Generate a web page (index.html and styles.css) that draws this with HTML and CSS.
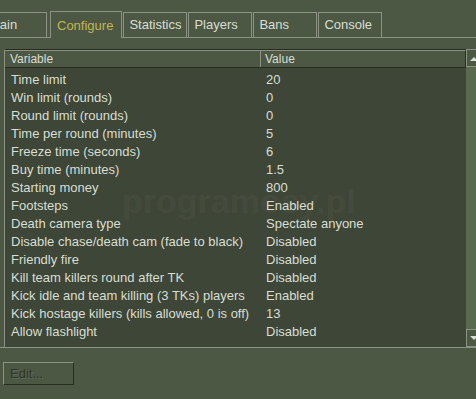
FILE: index.html
```html
<!DOCTYPE html>
<html lang="en">
<head>
    <meta charset="UTF-8">
    <title>Server - Configure</title>
    <link rel="stylesheet" href="styles.css">
</head>
<body>
    <div class="tabs">
        <div class="tab tab-first">Main</div>
        <div class="tab active">Configure</div>
        <div class="tab">Statistics</div>
        <div class="tab">Players</div>
        <div class="tab">Bans</div>
        <div class="tab">Console</div>
    </div>

    <div class="panel">
        <div class="listview">
            <div class="list-main">
                <div class="list-header">
                    <div class="col-var">Variable</div>
                    <div class="col-val">Value</div>
                </div>
                <div class="list-body">
                    <div class="row"><span class="col-var">Time limit</span><span class="col-val">20</span></div>
                    <div class="row"><span class="col-var">Win limit (rounds)</span><span class="col-val">0</span></div>
                    <div class="row"><span class="col-var">Round limit (rounds)</span><span class="col-val">0</span></div>
                    <div class="row"><span class="col-var">Time per round (minutes)</span><span class="col-val">5</span></div>
                    <div class="row"><span class="col-var">Freeze time (seconds)</span><span class="col-val">6</span></div>
                    <div class="row"><span class="col-var">Buy time (minutes)</span><span class="col-val">1.5</span></div>
                    <div class="row"><span class="col-var">Starting money</span><span class="col-val">800</span></div>
                    <div class="row"><span class="col-var">Footsteps</span><span class="col-val">Enabled</span></div>
                    <div class="row"><span class="col-var">Death camera type</span><span class="col-val">Spectate anyone</span></div>
                    <div class="row"><span class="col-var">Disable chase/death cam (fade to black)</span><span class="col-val">Disabled</span></div>
                    <div class="row"><span class="col-var">Friendly fire</span><span class="col-val">Disabled</span></div>
                    <div class="row"><span class="col-var">Kill team killers round after TK</span><span class="col-val">Disabled</span></div>
                    <div class="row"><span class="col-var">Kick idle and team killing (3 TKs) players</span><span class="col-val">Enabled</span></div>
                    <div class="row"><span class="col-var">Kick hostage killers (kills allowed, 0 is off)</span><span class="col-val">13</span></div>
                    <div class="row"><span class="col-var">Allow flashlight</span><span class="col-val">Disabled</span></div>
                </div>
            </div>
            <div class="scrollbar">
                <div class="scroll-btn">
                    <svg width="8" height="5" viewBox="0 0 8 5"><path d="M0 5 L4 1 L8 5 Z" fill="#d8ded3"/></svg>
                </div>
                <div class="scroll-track"></div>
                <div class="scroll-btn">
                    <svg width="8" height="5" viewBox="0 0 8 5"><path d="M0 0 L4 4 L8 0 Z" fill="#d8ded3"/></svg>
                </div>
            </div>
        </div>

        <div class="actions">
            <button class="btn" disabled>Edit...</button>
        </div>
    </div>

    <div class="watermark">programosy.pl</div>
</body>
</html>
```

FILE: styles.css
```css
body {
    margin: 0;
    width: 476px;
    height: 399px;
    overflow: hidden;
    background-color: #4c5844;
    color: #d8ded3;
    font-family: 'Liberation Sans', Arial, sans-serif;
    font-size: 13px;
    position: relative;
}

/* tab strip */
.tabs {
    display: flex;
    align-items: flex-end;
    gap: 1px;
    height: 37px;
    margin-left: -17px;
    border-bottom: 1px solid #8c9284;
}

.tab {
    min-width: 57px;
    height: 24px;
    line-height: 24px;
    padding: 0 0 0 5px;
    border: 1px solid #8c9284;
    border-bottom: none;
    background-color: #4c5844;
}

.tab.tab-first {
    margin-right: 2px;
}

.tab.active {
    height: 26px;
    line-height: 27px;
    padding: 0 8px 0 6px;
    min-width: 0;
    color: #c4b550;
    margin-bottom: -1px;
}

/* list */
.panel {
    padding: 11px 0 0 4px;
}

.listview {
    display: flex;
    height: 298px;
    border-bottom: 1px solid #8c9284;
    margin-left: -4px;
    padding-left: 4px;
}

.list-main {
    flex: 1;
    display: flex;
    flex-direction: column;
    background-color: #3e4637;
    border-left: 1px solid #8c9284;
    border-top: 1px solid #292c21;
}

.list-header {
    display: flex;
    height: 17px;
    line-height: 17px;
    font-size: 12px;
    background-color: #4c5844;
    border-bottom: 1px solid #292c21;
}

.list-header .col-var {
    width: 250px;
    padding-left: 5px;
    border-right: 1px solid #8c9284;
    border-top: 1px solid #8c9284;
}

.list-header .col-val {
    flex: 1;
    padding-left: 4px;
    border-top: 1px solid #8c9284;
    border-right: 1px solid #292c21;
}

.list-body {
    padding-top: 3px;
}

.row {
    display: flex;
    height: 18px;
    line-height: 18px;
}

.row .col-var {
    width: 255px;
    padding-left: 6px;
    white-space: nowrap;
}

.row .col-val {
    flex: 1;
}

.scrollbar {
    width: 14px;
    margin-right: -4px;
    display: flex;
    flex-direction: column;
    background-color: #5a6a50;
}

.scroll-btn {
    height: 16px;
    display: flex;
    align-items: center;
    justify-content: center;
    border: 1px solid #8c9284;
    border-right: none;
    background-color: #4c5844;
}

.scroll-track {
    flex: 1;
}

/* button row */
.actions {
    padding: 14px 0 0 0;
    margin-left: -1px;
}

.btn {
    width: 71px;
    height: 23px;
    text-align: left;
    padding: 0 0 0 6px;
    font-family: 'Liberation Sans', Arial, sans-serif;
    font-size: 13px;
    color: #2f3428;
    text-shadow: 1px 1px 0 #5f6b56;
    background-color: #4c5844;
    border: 1px solid;
    border-color: #8c9284 #292c21 #292c21 #8c9284;
}

.watermark {
    position: absolute;
    left: 122px;
    top: 182px;
    font-size: 34px;
    font-weight: bold;
    color: rgba(255, 255, 255, 0.05);
    pointer-events: none;
}
```
